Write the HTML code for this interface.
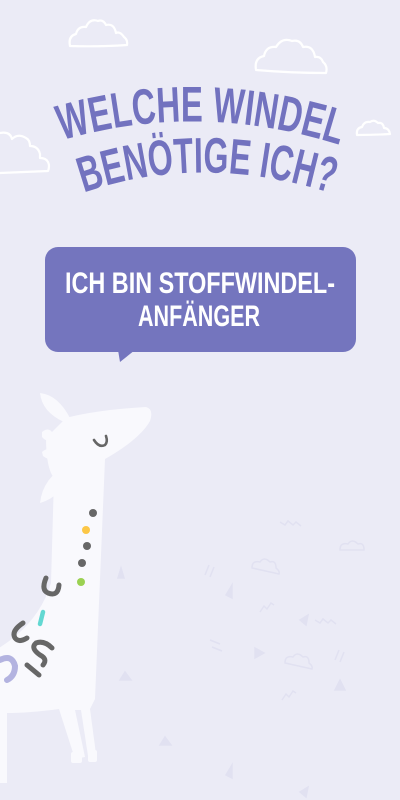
<!DOCTYPE html>
<html><head><meta charset="utf-8"><style>
html,body{margin:0;padding:0}
body{width:400px;height:800px;background:#ebebf6;overflow:hidden;position:relative}
svg{position:absolute;left:0;top:0}
</style></head><body>
<svg width="400" height="800" viewBox="0 0 400 800">
<defs>
<path id="l1" d="M 60 141 Q 200 99 346 147"/>
<path id="l2" d="M 80 194 Q 200 151 334 194"/>
</defs>
<g fill="#e1e1f1" stroke="#e1e1f1" stroke-width="1.5">
<path d="M226 595 l6 -10 l0 13 z"/><path d="M300 620 l8 -5 l-2 10 z"/><path d="M255 648 l9 5 l-9 5 z"/><path d="M335 690 l5 -10 l5 10 z"/><path d="M226 775 l6 -10 l0 13 z"/><path d="M300 792 l8 -5 l-2 10 z"/>
<path d="M118 578 l3 -10 l3 10 z"/><path d="M120 680 l5 -8 l6 8 z"/><path d="M160 745 l5 -8 l6 8 z"/>
</g>
<g fill="none" stroke="#e1e1f1" stroke-width="1.5">
<path d="M252 568 q0 -8 8 -6 q4 -6 10 0 q6 -2 6 6 q4 3 3 6 z"/><path d="M285 663 q0 -8 8 -6 q4 -6 10 0 q6 -2 6 6 q4 3 3 6 z"/><path d="M340 550 q0 -8 8 -6 q4 -6 10 0 q6 -2 6 6 z"/>
<path d="M315 620 l5 3 l3 -4 l5 4 l3 -3 l5 4"/><path d="M260 612 l4 -6 l3 3 l4 -6 l3 2"/><path d="M282 700 l4 -6 l3 3 l4 -6 l3 2"/><path d="M280 522 l5 3 l3 -4 l5 4 l3 -3 l5 4"/>
<path d="M205 575 l4 -10 M210 577 l4 -10"/><path d="M335 660 l4 -10 M340 662 l4 -10"/><path d="M210 640 l10 4 M212 647 l10 4"/>
</g>
<g fill="none" stroke="#fff" stroke-width="2.2" stroke-linecap="round" stroke-linejoin="round">
<path d="M70 46 q-2 -10 6 -12 q2 -8 10 -7 q4 -9 12 -6 q5 -2 8 4 q8 -2 10 8 q4 -2 8 4 q4 3 3 8 q-30 2 -57 1 z"/>
<path d="M256 70 q-2 -12 8 -14 q2 -10 12 -9 q6 -10 16 -6 q8 -2 11 6 q10 -2 12 10 q6 -1 8 5 q5 4 3 11 q-35 0 -70 -3 z"/>
<path d="M0 133 q10 -2 12 6 q6 -6 14 -1 q4 2 4 8 q8 0 10 8 q0 4 0 4 q6 0 8 4 q2 4 0 9 q-25 1 -48 2"/>
<path d="M357 135 q-1 -7 5 -8 q2 -6 8 -5 q4 -3 8 1 q5 -1 6 5 q5 0 6 6 q-16 1 -33 1 z"/>
</g>
<g fill="#7272bf" font-family="Liberation Sans Narrow, Liberation Sans, sans-serif" font-weight="bold" font-size="50">
<text><textPath href="#l1" textLength="282" lengthAdjust="spacingAndGlyphs" startOffset="2">WELCHE WINDEL</textPath></text>
<text><textPath href="#l2" textLength="252" lengthAdjust="spacingAndGlyphs" startOffset="4">BENÖTIGE ICH?</textPath></text>
</g>
<rect x="45" y="247" width="311" height="105" rx="13" fill="#7475be"/>
<path d="M118 350 L120 362 L135 350 z" fill="#7475be"/>
<g fill="#fff" font-family="Liberation Sans Narrow, Liberation Sans, sans-serif" font-size="30" font-weight="bold">
<text x="65" y="293" textLength="270" lengthAdjust="spacingAndGlyphs">ICH BIN STOFFWINDEL-</text>
<text x="138" y="326" textLength="122" lengthAdjust="spacingAndGlyphs">ANFÄNGER</text>
</g>
<g fill="#f9f9fd">
<path d="M40 393 q18 2 30 25 l-6 4 q-22 -10 -24 -29 z"/>
<path d="M68 465 q-25 12 -28 38 q22 -6 32 -34 z"/>
<path d="M42 432 q6 -5 10 0 l13 1 l0 5 l-13 0 q-5 5 -10 -1 z"/>
<path d="M42 452 q5 -5 10 -1 l13 -3 l1 5 l-13 3 q-4 5 -10 0 z"/>
<path d="M66 418 q30 -8 80 -11 q8 2 4 14 q-10 18 -45 38 l-10 240 l-5 10 l6 45 l-8 2 l-7 -46 l-6 0 l10 47 l-10 2 l-16 -50 q-30 4 -52 4 l0 70 l-8 0 l0 -135 q40 -25 52 -65 l3 -105 q-8 -10 -8 -40 z"/>
<rect x="88" y="750" width="9" height="12" rx="2"/><rect x="71" y="752" width="11" height="11" rx="2"/>
</g>
<path d="M94 440 q5 8 11 5 q3 -3 1 -9" fill="none" stroke="#666" stroke-width="2.6" stroke-linecap="round"/>
<g fill="#676767"><circle cx="93" cy="513" r="4"/><circle cx="87" cy="546" r="4"/><circle cx="82" cy="563" r="4"/></g>
<circle cx="86" cy="530" r="4" fill="#fcc747"/><circle cx="81" cy="582" r="4" fill="#9bd152"/>
<g fill="none" stroke="#676767" stroke-width="5" stroke-linecap="round">
<path d="M46 578 q-5 12 2 15 q10 4 11 -8"/>
<path d="M23 623 q-12 8 -8 15 q4 5 12 0"/>
<path d="M52 648 q-8 -8 -16 -5 q-6 5 4 12 q8 4 3 10"/>
<path d="M27 665 l12 10"/>
</g>
<path d="M43 612 l-3 12" stroke="#63d8d2" stroke-width="4.5" stroke-linecap="round"/>
<path d="M0 660 q12 -6 15 6 q0 10 -8 14" fill="none" stroke="#b3b3e0" stroke-width="6" stroke-linecap="round"/>
</svg>
</body></html>
